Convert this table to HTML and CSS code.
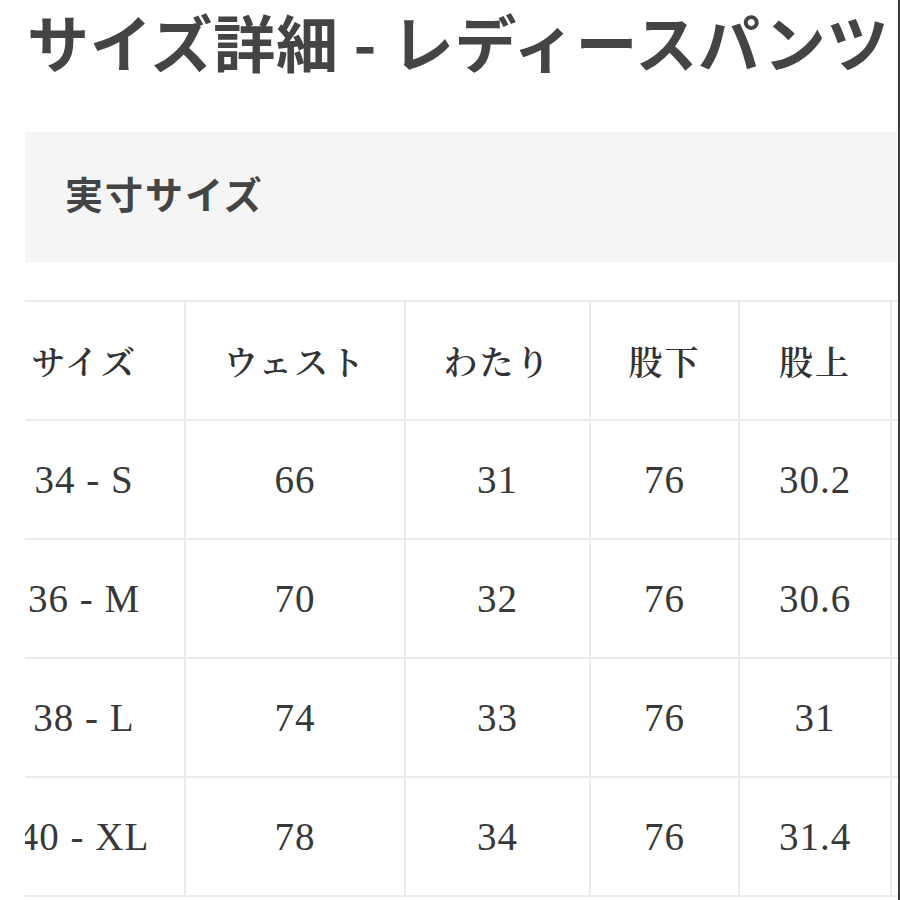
FILE: index.html
```html
<!DOCTYPE html>
<html lang="ja">
<head>
<meta charset="utf-8">
<title>サイズ詳細 - レディースパンツ</title>
<link rel="stylesheet" href="styles.css">
</head>
<body>
<div class="page">
  <h1 class="title">サイズ詳細 - レディースパンツ</h1>
  <div class="section-head">実寸サイズ</div>
  <div class="table-scroll">
    <table class="size-table">
      <colgroup>
        <col class="c1"><col class="c2"><col class="c3"><col class="c4"><col class="c5"><col class="c6">
      </colgroup>
      <thead>
        <tr><th>サイズ</th><th>ウェスト</th><th>わたり</th><th>股下</th><th>股上</th><th></th></tr>
      </thead>
      <tbody>
        <tr><td>34 - S</td><td>66</td><td>31</td><td>76</td><td>30.2</td><td></td></tr>
        <tr><td>36 - M</td><td>70</td><td>32</td><td>76</td><td>30.6</td><td></td></tr>
        <tr><td>38 - L</td><td>74</td><td>33</td><td>76</td><td>31</td><td></td></tr>
        <tr><td>40 - XL</td><td>78</td><td>34</td><td>76</td><td>31.4</td><td></td></tr>
      </tbody>
    </table>
  </div>
</div>
</body>
</html>
```

FILE: styles.css
```css
html, body {
  margin: 0;
  padding: 0;
  background: #ffffff;
}

.page {
  width: 898px;
  height: 900px;
  overflow: hidden;
  border-right: 2px solid #3a3a3a;
  box-sizing: content-box;
}

.title {
  margin: 0;
  padding-left: 27px;
  font-family: "Noto Sans CJK JP", "Liberation Sans", sans-serif;
  font-size: 62px;
  font-weight: 700;
  line-height: 82px;
  letter-spacing: 0.7px;
  color: #444444;
  white-space: nowrap;
}

.section-head {
  margin: 50px 1px 0 25px;
  height: 130px;
  box-sizing: border-box;
  background: #f5f5f5;
  display: flex;
  align-items: center;
  padding: 0 0 9px 40px;
  font-family: "Noto Sans CJK JP", "Liberation Sans", sans-serif;
  font-size: 38px;
  font-weight: 700;
  letter-spacing: 2px;
  color: #444444;
}

.table-scroll {
  margin: 38px 0 0 25px;
  overflow: hidden;
}

.size-table {
  margin-left: -43px;
  border-collapse: collapse;
  table-layout: fixed;
  width: 1058px;
  font-family: "Liberation Serif", "Noto Serif CJK JP", "Noto Sans CJK JP", serif;
  color: #333333;
}

.c1 { width: 202px; }
.c2 { width: 220px; }
.c3 { width: 185px; }
.c4 { width: 149px; }
.c5 { width: 152px; }
.c6 { width: 150px; }

.size-table th,
.size-table td {
  border: 2px solid #ebebeb;
  height: 117px;
  padding: 0;
  text-align: center;
  vertical-align: middle;
  white-space: nowrap;
}

.size-table th {
  font-size: 34px;
  font-weight: 600;
  letter-spacing: 2px;
}

.size-table td {
  font-size: 39px;
  font-weight: 400;
  letter-spacing: 1px;
  color: #383838;
}
```
